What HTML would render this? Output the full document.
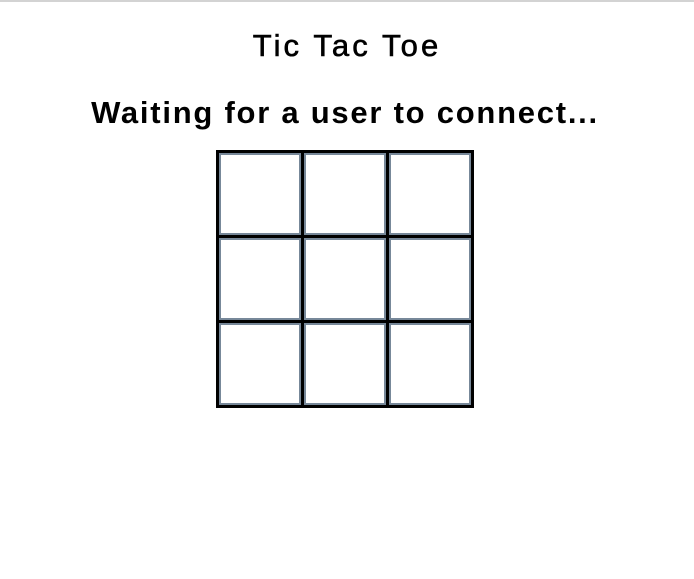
<!DOCTYPE html>
<html><head><style>
html,body{margin:0;padding:0;background:#fff;width:694px;height:579px;overflow:hidden}
body{border-top:2px solid #d3d3d3;box-sizing:border-box;font-family:"Liberation Sans",sans-serif;color:#000}
.t{position:absolute;left:0;width:694px;text-align:center;white-space:nowrap}
#a{top:28px;font-size:31px;line-height:36px;letter-spacing:3.1px;left:0px;-webkit-text-stroke:0.6px #000}
#b{top:94px;font-size:31px;line-height:38px;font-weight:bold;letter-spacing:1.75px;left:-2px}
#g{position:absolute;left:216px;top:150px;width:252px;height:252px;border:3px solid #000;background:#000;display:grid;grid-template-columns:repeat(3,1fr);grid-template-rows:repeat(3,1fr);gap:3px}
#g div{background:#fff;border:2px solid #778899}
</style></head><body>
<div class="t" id="a">Tic Tac Toe</div>
<div class="t" id="b">Waiting for a user to connect...</div>
<div id="g"><div></div><div></div><div></div><div></div><div></div><div></div><div></div><div></div><div></div></div>
</body></html>
